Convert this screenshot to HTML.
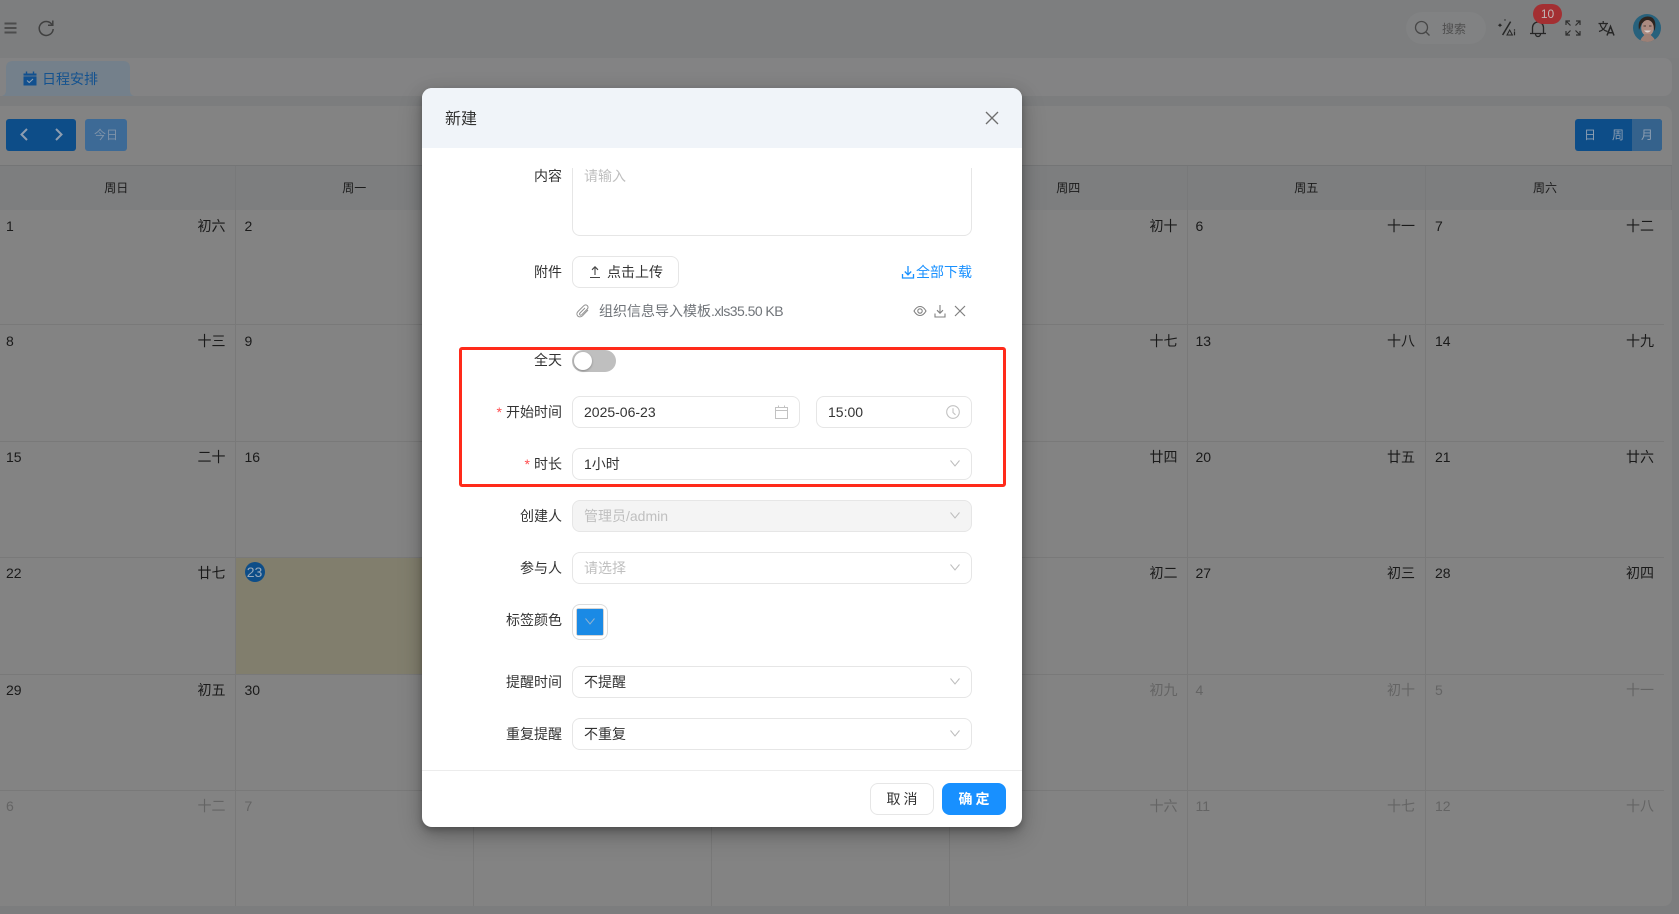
<!DOCTYPE html>
<html lang="zh">
<head>
<meta charset="utf-8">
<title>日程安排</title>
<style>
*{box-sizing:border-box;margin:0;padding:0}
html,body{width:1679px;height:914px;overflow:hidden;background:#7c7d7e}
body{position:relative;font-family:"Liberation Sans","Noto Sans CJK SC",sans-serif;font-size:14px;color:#333}
.a{position:absolute}
.t{position:absolute;white-space:nowrap;line-height:22px;height:22px}
svg{position:absolute;display:block;overflow:visible}
/* calendar */
#grid{position:absolute;left:0;top:210px;width:1664px;display:grid;grid-template-columns:235.5px 238.5px 238px 238px 237.5px 238.5px 238px;grid-template-rows:115px 117px 116px 117px 116px 115px}
.c{position:relative;border-right:1px solid #797979;border-bottom:1px solid #797979;color:#1a1a1a}
.c:nth-child(7n){border-right:0}
.c:nth-last-child(-n+7){border-bottom:0}
.c b{position:absolute;font-weight:400;left:9px;top:5px;line-height:22px}
.c:nth-child(7n+1) b{left:6px}
.c:nth-child(7n+6) b{left:8px}
.c i{position:absolute;font-style:normal;right:9px;top:5px;line-height:22px}
.c:nth-child(7n+6) i,.c:nth-child(7n) i{right:10px}
.c:nth-child(n+15) b,.c:nth-child(n+15) i{top:4px}
.g{color:#646464}
.hd{position:absolute;top:166px;height:44px;line-height:45px;text-align:center;font-size:12px;color:#1a1a1a;border-right:1px solid #78797a}
/* modal */
.lb{position:absolute;right:1117px;white-space:nowrap;line-height:22px;color:#333}
.lb s{text-decoration:none;color:#ff4d4f;margin-right:4px;font-family:"Liberation Sans",sans-serif}
.in{position:absolute;left:572px;width:400px;height:32px;border:1px solid #e6e6e6;border-radius:8px;background:#fff;line-height:30px;padding-left:11px;color:#333}
.ph{color:#bfbfbf}
</style>
</head>
<body>
<!-- top bar -->
<div class="a" style="left:0;top:0;width:1679px;height:58px;background:#7d7e7f"></div>
<svg style="left:0;top:0" width="60" height="58" fill="none">
<path d="M4.500 23.500H16.500M4.500 28H16.500M4.500 32.500H16.500" stroke="#4c4c4c" stroke-width="2"/>
<path d="M52 24.500A7 7 0 1 0 53.200 29" stroke="#404040" stroke-width="1.500"/>
<path d="M52.800 20.500V25.300H48" stroke="#404040" stroke-width="1.500"/>
</svg>
<div class="a" style="left:1406px;top:12px;width:80px;height:32px;border-radius:16px;background:#818283"></div>
<svg style="left:1414px;top:20px" width="18" height="18" fill="none"><circle cx="7.500" cy="7.500" r="6" stroke="#474747" stroke-width="1.300"/><path d="M12 12L15.500 15.500" stroke="#474747" stroke-width="1.300"/></svg>
<div class="t" style="left:1442px;top:18px;font-size:12px;color:#4f4f4f">搜索</div>
<!-- AI icon -->
<svg style="left:1497px;top:18px" width="20" height="20" fill="none">
<path d="M13.600 3.600L5.600 17" stroke="#262626" stroke-width="1.500"/>
<path d="M3 5.200L3.800 6.400L5.200 7.200L3.800 8L3 9.200L2.200 8L.8 7.200L2.200 6.400Z" fill="#262626"/>
<circle cx="8" cy="2" r=".7" fill="#262626"/>
<path d="M10 17L12.700 12L15.400 17Z" stroke="#262626" stroke-width="1"/>
<path d="M17.500 13.500V17.300" stroke="#262626" stroke-width="1.200"/>
<circle cx="17.500" cy="12" r=".7" fill="#262626"/>
</svg>
<!-- bell -->
<svg style="left:1529px;top:19px" width="18" height="18" fill="none">
<path d="M1 14.500H17M3.500 14.500V8.500A5.500 5.500 0 0 1 14.500 8.500V14.500" stroke="#262626" stroke-width="1.300"/>
<path d="M6.500 15A2.500 2.500 0 0 0 11.500 15" stroke="#262626" stroke-width="1.300"/>
</svg>
<div class="a" style="left:1533px;top:4px;width:29px;height:20px;border-radius:10px;background:#a32f32;color:#c0b6b6;text-align:center;font-size:12px;line-height:20px">10</div>
<!-- fullscreen -->
<svg style="left:1565px;top:20px" width="16" height="16" fill="none" stroke="#2e2e2e" stroke-width="1.200">
<path d="M1 5V1H5M1 1L5.500 5.500M11 1H15V5M15 1L10.500 5.500M1 11V15H5M1 15L5.500 10.500M11 15H15V11M15 15L10.500 10.500"/>
</svg>
<!-- translate -->
<svg style="left:1598px;top:20px" width="18" height="18" fill="none" stroke="#262626" stroke-width="1.200">
<path d="M.5 3.500H10M5.200 1V3.500M2 3.500C3 8 5.500 10.500 9.500 11.500M8.500 3.500C7.500 8 4.500 10.500 1 11.500"/>
<path d="M9 15.500L12.500 6.500L16 15.500M10.200 12.800H14.800" stroke-width="1.500"/>
</svg>
<!-- avatar -->
<svg style="left:1633px;top:14px" width="28" height="28">
<defs><clipPath id="av"><circle cx="14" cy="14" r="14"/></clipPath></defs>
<g clip-path="url(#av)">
<rect width="28" height="28" fill="#27617c"/>
<path d="M6 16C4 5 11 2.500 15 2.500C21 2.500 24 8 21.500 17L19 9H9Z" fill="#2e241f"/>
<ellipse cx="14.500" cy="14" rx="6.300" ry="8" fill="#ab8a80"/>
<path d="M7 28C8 23 11 22 12 20H17C18 22 21 23 23 28Z" fill="#9c8076"/>
<path d="M11 16.500Q14.500 20.500 18 16.500Z" fill="#d8d2d0"/>
<path d="M10.500 12H13M16 12H18.500" stroke="#4a3a34" stroke-width=".9"/>
</g>
</svg>

<!-- tab bar -->
<div class="a" style="left:0;top:58px;width:1672px;height:38px;background:#838384;border-radius:0 8px 8px 0"></div>
<svg style="left:0;top:58px" width="140" height="38"><path d="M2 38C5 37 6 35 6 32V10Q6 3 13 3H123Q130 3 130 10V32C130 35 131 37 134 38Z" fill="#74808b"/></svg>
<svg style="left:23px;top:71px" width="14" height="15" fill="none">
<path d="M.5 2.500H13.500V14.500H.5Z" fill="#11508f"/><path d="M3.500 .5V3M10.500 .5V3" stroke="#11508f" stroke-width="1.400"/>
<path d="M.5 5H13.500" stroke="#74808b" stroke-width=".8"/>
<path d="M4 9.500L6.200 11.500L10 8" stroke="#8fa1b2" stroke-width="1.100"/>
</svg>
<div class="t" style="left:42px;top:68px;color:#14528f">日程安排</div>

<!-- card -->
<div class="a" style="left:0;top:106px;width:1672px;height:800px;background:#838383;border-radius:0 8px 8px 0"></div>
<div class="a" style="left:6px;top:119px;width:70px;height:32px;background:#0d4d88;border-radius:3px"></div>
<svg style="left:6px;top:119px" width="70" height="32" fill="none" stroke="#8e9db0" stroke-width="2"><path d="M21 10L15.500 15.500L21 21M50 10L55.500 15.500L50 21"/></svg>
<div class="a" style="left:85px;top:119px;width:42px;height:32px;background:#3d6a96;border-radius:3px;color:#7e93a9;text-align:center;line-height:32px;font-size:12px">今日</div>
<div class="a" style="left:1575px;top:119px;width:87px;height:32px;background:#0d4d88;border-radius:3px;overflow:hidden">
<div class="a" style="left:57px;top:0;width:30px;height:32px;background:#35628c"></div>
<div class="t" style="left:9px;top:5px;font-size:12px;color:#8e9fb2;width:12px">日</div>
<div class="t" style="left:37px;top:5px;font-size:12px;color:#8e9fb2">周</div>
<div class="t" style="left:66px;top:5px;font-size:12px;color:#8e9fb2">月</div>
</div>
<div class="a" style="left:0;top:165px;width:1672px;height:1px;background:#747576"></div>
<div class="a" style="left:0;top:166px;width:1672px;height:44px;background:#7d7e7f;border-right:1px solid #78797a"></div>
<div class="hd" style="left:0;width:235.500px;padding-right:2px">周日</div>
<div class="hd" style="left:235.500px;width:238.500px">周一</div>
<div class="hd" style="left:474px;width:238px">周二</div>
<div class="hd" style="left:712px;width:238px">周三</div>
<div class="hd" style="left:950px;width:237.500px">周四</div>
<div class="hd" style="left:1187.500px;width:238.500px">周五</div>
<div class="hd" style="left:1426px;width:238px;border-right:0">周六</div>

<div id="grid">
<div class="c"><b>1</b><i>初六</i></div><div class="c"><b>2</b><i>初七</i></div><div class="c"><b>3</b><i>初八</i></div><div class="c"><b>4</b><i>初九</i></div><div class="c"><b>5</b><i>初十</i></div><div class="c"><b>6</b><i>十一</i></div><div class="c"><b>7</b><i>十二</i></div>
<div class="c"><b>8</b><i>十三</i></div><div class="c"><b>9</b><i>十四</i></div><div class="c"><b>10</b><i>十五</i></div><div class="c"><b>11</b><i>十六</i></div><div class="c"><b>12</b><i>十七</i></div><div class="c"><b>13</b><i>十八</i></div><div class="c"><b>14</b><i>十九</i></div>
<div class="c"><b>15</b><i>二十</i></div><div class="c"><b>16</b><i>廿一</i></div><div class="c"><b>17</b><i>廿二</i></div><div class="c"><b>18</b><i>廿三</i></div><div class="c"><b>19</b><i>廿四</i></div><div class="c"><b>20</b><i>廿五</i></div><div class="c"><b>21</b><i>廿六</i></div>
<div class="c"><b>22</b><i>廿七</i></div><div class="c" style="background:#817e6d"><b style="left:9px;width:20px;height:20px;border-radius:50%;background:#0d4d88;color:#97a8ba;text-align:center;line-height:20px">23</b></div><div class="c"><b>24</b><i>廿九</i></div><div class="c"><b>25</b><i>六月</i></div><div class="c"><b>26</b><i>初二</i></div><div class="c"><b>27</b><i>初三</i></div><div class="c"><b>28</b><i>初四</i></div>
<div class="c"><b>29</b><i>初五</i></div><div class="c"><b>30</b><i>初六</i></div><div class="c g"><b>1</b><i>初七</i></div><div class="c g"><b>2</b><i>初八</i></div><div class="c g"><b>3</b><i>初九</i></div><div class="c g"><b>4</b><i>初十</i></div><div class="c g"><b>5</b><i>十一</i></div>
<div class="c g"><b>6</b><i>十二</i></div><div class="c g"><b>7</b><i>十三</i></div><div class="c g"><b>8</b><i>十四</i></div><div class="c g"><b>9</b><i>十五</i></div><div class="c g"><b>10</b><i>十六</i></div><div class="c g"><b>11</b><i>十七</i></div><div class="c g"><b>12</b><i>十八</i></div>
</div>

<!-- modal -->
<div class="a" style="left:422px;top:88px;width:600px;height:739px;background:#fff;border-radius:10px;box-shadow:0 6px 16px rgba(0,0,0,.22),0 3px 6px rgba(0,0,0,.18),0 9px 28px rgba(0,0,0,.12);overflow:hidden">
<div class="a" style="left:0;top:0;width:600px;height:60px;background:#f0f4f9"></div>
<div class="a" style="left:0;top:682px;width:600px;height:1px;background:#ececec"></div>
</div>
<div class="t" style="left:445px;top:109px;font-size:16px;color:#333">新建</div>
<svg style="left:985px;top:111px" width="14" height="14" fill="none" stroke="#6e6e6e" stroke-width="1.300"><path d="M1 1L13 13M13 1L1 13"/></svg>

<!-- textarea clipped at top -->
<div class="a" style="left:572px;top:168px;width:400px;height:68px;overflow:hidden">
<div class="a" style="left:0;top:-30px;width:400px;height:98px;border:1px solid #e6e6e6;border-radius:8px"></div>
</div>
<div class="lb" style="top:165px">内容</div>
<div class="t ph" style="left:584px;top:165px">请输入</div>

<div class="lb" style="top:261px">附件</div>
<div class="a" style="left:572px;top:256px;width:107px;height:32px;border:1px solid #e6e6e6;border-radius:8px"></div>
<svg style="left:589px;top:265px" width="12" height="14" fill="none" stroke="#444" stroke-width="1.100"><path d="M1 12.500H11M6 10V2M3 4.800L6 1.800L9 4.800"/></svg>
<div class="t" style="left:607px;top:261px;color:#333">点击上传</div>
<svg style="left:901px;top:265px" width="14" height="14" fill="none" stroke="#1890ff" stroke-width="1.300"><path d="M7 1V9.500M3.800 6.500L7 9.800L10.200 6.500M1.500 9V13H12.500V9"/></svg>
<div class="t" style="left:916px;top:261px;color:#1890ff">全部下载</div>

<svg style="left:576px;top:304px" width="14" height="14" fill="none" stroke="#909090" stroke-width="1"><path d="M12 6L6.500 11.800C5 13.300 2.800 13.200 1.700 12C.6 10.800.6 9 2 7.500L7.800 1.700C8.900 .7 10.300 .7 11.300 1.600C12.300 2.600 12.300 4 11.200 5.100L5.700 10.800C5.100 11.400 4.200 11.300 3.900 10.800C3.400 10.300 3.500 9.600 4 9L9 4"/></svg>
<div class="t" style="left:599px;top:300px;color:#707479">组织信息导入模板<span style="letter-spacing:-.55px">.xls35.50 KB</span></div>
<svg style="left:913px;top:304px" width="54" height="14" fill="none" stroke="#808080" stroke-width="1.100">
<path d="M1 7C3 3.500 5 2.500 7 2.500C9 2.500 11 3.500 13 7C11 10.500 9 11.500 7 11.500C5 11.500 3 10.500 1 7Z"/><circle cx="7" cy="7" r="2.200"/>
<path d="M27 1V9M24 6.200L27 9.200L30 6.200M22 9.500V13H32V9.500"/>
<path d="M42 2L52 12M52 2L42 12" stroke-width="1.200"/>
</svg>

<!-- red box -->
<div class="a" style="left:459px;top:347px;width:547px;height:140px;border:3px solid #ff2a1a;border-radius:3px;z-index:5"></div>

<div class="lb" style="top:349px">全天</div>
<div class="a" style="left:572px;top:350px;width:44px;height:22px;border-radius:11px;background:#bfbfbf"></div>
<div class="a" style="left:574px;top:352px;width:18px;height:18px;border-radius:50%;background:#fff;box-shadow:0 1px 2px rgba(0,0,0,.3)"></div>

<div class="lb" style="top:401px"><s>*</s>开始时间</div>
<div class="in" style="width:228px;top:396px">2025-06-23</div>
<svg style="left:775px;top:405px" width="13" height="14" fill="none" stroke="#c2c2c2" stroke-width="1"><path d="M.5 2.500H12.500V13.500H.5ZM.5 5.500H12.500M3.500 .5V3M9.500 .5V3"/></svg>
<div class="in" style="left:816px;width:156px;top:396px">15:00</div>
<svg style="left:946px;top:405px" width="14" height="14" fill="none" stroke="#c2c2c2" stroke-width="1.100"><circle cx="7" cy="7" r="6.300"/><path d="M7 3.200V7.500L9.500 9.800"/></svg>

<div class="lb" style="top:453px"><s>*</s>时长</div>
<div class="in" style="top:448px">1小时</div>

<div class="lb" style="top:505px">创建人</div>
<div class="in" style="top:500px;background:#f4f4f4;color:#bfbfbf">管理员/admin</div>

<div class="lb" style="top:557px">参与人</div>
<div class="in ph" style="top:552px">请选择</div>

<div class="lb" style="top:609px">标签颜色</div>
<div class="a" style="left:572px;top:604px;width:36px;height:36px;border:1px solid #dcdcdc;border-radius:8px"></div>
<div class="a" style="left:577px;top:609px;width:26px;height:26px;background:#1a8ae5;border-radius:1px;box-shadow:0 0 0 .5px #a9a9a9"></div>
<svg style="left:585px;top:618px" width="10" height="7" fill="none" stroke="#8fb2d0" stroke-width="1"><path d="M.5 .5L5 6L9.500 .5"/></svg>

<div class="lb" style="top:671px">提醒时间</div>
<div class="in" style="top:666px">不提醒</div>
<div class="lb" style="top:723px">重复提醒</div>
<div class="in" style="top:718px">不重复</div>

<svg style="left:950px;top:460px" width="10" height="7" fill="none" stroke="#bdbdbd" stroke-width="1"><path d="M.5 .5L5 6L9.500 .5"/></svg>
<svg style="left:950px;top:512px" width="10" height="7" fill="none" stroke="#bdbdbd" stroke-width="1"><path d="M.5 .5L5 6L9.500 .5"/></svg>
<svg style="left:950px;top:564px" width="10" height="7" fill="none" stroke="#bdbdbd" stroke-width="1"><path d="M.5 .5L5 6L9.500 .5"/></svg>
<svg style="left:950px;top:678px" width="10" height="7" fill="none" stroke="#bdbdbd" stroke-width="1"><path d="M.5 .5L5 6L9.500 .5"/></svg>
<svg style="left:950px;top:730px" width="10" height="7" fill="none" stroke="#bdbdbd" stroke-width="1"><path d="M.5 .5L5 6L9.500 .5"/></svg>

<div class="a" style="left:870px;top:783px;width:64px;height:32px;border:1px solid #e6e6e6;border-radius:8px;background:#fff;text-align:center;line-height:30px;color:#333;letter-spacing:3px;padding-left:3px">取消</div>
<div class="a" style="left:942px;top:783px;width:64px;height:32px;border-radius:8px;background:#1890ff;text-align:center;line-height:32px;color:#fff;letter-spacing:3px;padding-left:3px;font-weight:700">确定</div>
</body>
</html>
